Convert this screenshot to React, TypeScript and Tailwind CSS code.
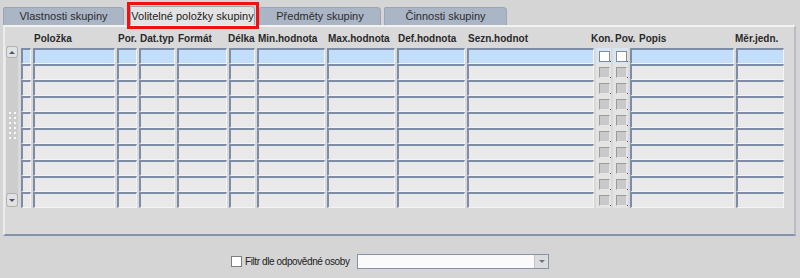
import React from "react";

const cols: { label: string; w: number; kind?: "cb"; labelShift?: number }[] = [
  { label: "", w: 10 },
  { label: "Položka", w: 82 },
  { label: "Por.", w: 20 },
  { label: "Dat.typ", w: 36 },
  { label: "Formát", w: 50 },
  { label: "Délka", w: 26, labelShift: -2 },
  { label: "Min.hodnota", w: 68 },
  { label: "Max.hodnota", w: 68 },
  { label: "Def.hodnota", w: 68 },
  { label: "Sezn.hodnot", w: 127 },
  { label: "Kon.", w: 15, kind: "cb", labelShift: -6 },
  { label: "Pov.", w: 15, kind: "cb", labelShift: 1 },
  { label: "Popis", w: 104, labelShift: 8 },
  { label: "Měr.jedn.", w: 48, labelShift: -2 },
];

function Cell({ w, sel }: { w: number; sel: boolean }) {
  return (
    <div
      style={{ width: w }}
      className={
        "h-[16px] shrink-0 border-t-2 border-l-2 border-r border-b border-t-[#7e8da6] border-l-[#7e8da6] border-r-[#f4f4f4] border-b-[#f4f4f4] " +
        (sel ? "bg-[#c3defa]" : "bg-[#e9e9e9]")
      }
    />
  );
}

function Cb({ w, sel }: { w: number; sel: boolean }) {
  return (
    <div
      style={{ width: w }}
      className={"h-[16px] shrink-0 relative flex items-center pl-[3px] " + (sel ? "bg-[#d6e6f6]" : "bg-[#e4e4e4]")}
    >
      {sel ? (
        <div className="w-[11px] h-[11px] bg-white border border-[#8a8a8a]" />
      ) : (
        <div className="w-[11px] h-[11px] bg-[#c9c9c9] border border-[#9c9c9c] border-r-[#e6e6e6] border-b-[#e6e6e6]" />
      )}
      <div className="absolute right-[0px] bottom-[2px] w-[1px] h-[1px] bg-[#555]" />
    </div>
  );
}

export default function App() {
  const rows = Array.from({ length: 10 }, (_, i) => i);
  return (
    <div
      className="w-[800px] h-[278px] bg-[#d5d5d5] text-[11px] text-[#222] overflow-hidden relative"
      style={{ fontFamily: '"Liberation Sans", Arial, sans-serif' }}
    >
      {/* Tabs */}
      <div className="flex items-end h-[25px] pl-[3px]">
        <div className="w-[121px] h-[18px] bg-[#aab6c6] border border-b-0 border-[#9aa6b6] rounded-tr-[4px] rounded-tl-[2px] flex items-center justify-center text-[#2c2c2c]">
          Vlastnosti skupiny
        </div>
        <div className="ml-[6px] w-[125px] h-[19px] bg-[#e3e3e3] border border-b-0 border-[#9aa6b6] rounded-tr-[4px] flex items-center justify-center text-[#222]">
          Volitelné položky skupiny
        </div>
        <div className="ml-[4px] w-[122px] h-[18px] bg-[#aab6c6] border border-b-0 border-[#9aa6b6] rounded-tr-[4px] rounded-tl-[2px] flex items-center justify-center text-[#2c2c2c]">
          Předměty skupiny
        </div>
        <div className="ml-[3px] w-[123px] h-[18px] bg-[#aab6c6] border border-b-0 border-[#9aa6b6] rounded-tr-[4px] rounded-tl-[2px] flex items-center justify-center text-[#2c2c2c]">
          Činnosti skupiny
        </div>
      </div>
      {/* Red highlight */}
      <div className="absolute left-[127px] top-[2px] w-[132px] h-[27px] border-[3px] border-[#ee1111]" />

      {/* Panel */}
      <div className="ml-[3px] w-[793px] h-[211px] bg-[#d9d9d9] border-t-2 border-l-2 border-t-[#f2f2f2] border-l-[#ececec] border-r-2 border-b-2 border-r-[#b8bcc4] border-b-[#8593aa] flex pt-[19px]">
        {/* scrollbar */}
        <div className="w-[13px] h-[161px] bg-[#cdcdcd] border-l border-[#e6e6e6] flex flex-col items-center justify-between">
          <div className="w-[12px] h-[12px] bg-[#e2e2e2] border border-[#b0b0b0] rounded-[3px] flex items-center justify-center">
            <div className="w-0 h-0 border-l-[3px] border-r-[3px] border-b-[3px] border-l-transparent border-r-transparent border-b-[#4a5670]" />
          </div>
          <div className="flex flex-col gap-[3px] items-center">
            {Array.from({ length: 6 }).map((_, i) => (
              <div key={i} className="flex gap-[3px]">
                <div className="w-[2px] h-[2px] bg-[#f8f8f8]" />
                <div className="w-[2px] h-[2px] bg-[#f8f8f8]" />
              </div>
            ))}
          </div>
          <div className="w-[12px] h-[14px] bg-[#e2e2e2] border border-[#b0b0b0] rounded-[3px] flex items-center justify-center">
            <div className="w-0 h-0 border-l-[3px] border-r-[3px] border-t-[3px] border-l-transparent border-r-transparent border-t-[#4a5670]" />
          </div>
        </div>
        {/* grid */}
        <div className="ml-[3px] -mt-[13px] flex flex-col">
          <div className="flex h-[12px] items-center gap-[2px] font-bold text-[10px] text-[#2a2a2a] mb-[3px]">
            {cols.map((c, i) => (
              <div key={i} style={{ width: c.w }} className="shrink-0 relative h-[12px]">
                <span
                  className="absolute top-[-2px] whitespace-nowrap"
                  style={{ left: 1 + (c.labelShift ?? 0) }}
                >
                  {c.label}
                </span>
              </div>
            ))}
          </div>
          {rows.map((r) => (
            <div key={r} className="flex gap-[2px]">
              {cols.map((c, i) =>
                c.kind === "cb" ? (
                  <Cb key={i} w={c.w} sel={r === 0} />
                ) : (
                  <Cell key={i} w={c.w} sel={r === 0} />
                )
              )}
            </div>
          ))}
        </div>
      </div>

      {/* Filter row */}
      <div className="flex items-center mt-[17px] h-[16px] pl-[231px]">
        <div className="w-[11px] h-[11px] bg-white border border-[#7e7e7e]" />
        <span className="ml-[3px] text-[10px] tracking-[-0.4px] text-[#222] w-[110px] whitespace-nowrap">
          Filtr dle odpovědné osoby
        </span>
        <div className="ml-[2px] w-[192px] h-[15px] bg-[#fafafa] border border-[#8593aa] flex justify-end items-stretch">
          <div className="w-[14px] bg-[#dcdcdc] border-l border-[#c4c4c4] flex items-center justify-center">
            <div className="w-0 h-0 border-l-[3px] border-r-[3px] border-t-[3px] border-l-transparent border-r-transparent border-t-[#6a7486]" />
          </div>
        </div>
      </div>
    </div>
  );
}
